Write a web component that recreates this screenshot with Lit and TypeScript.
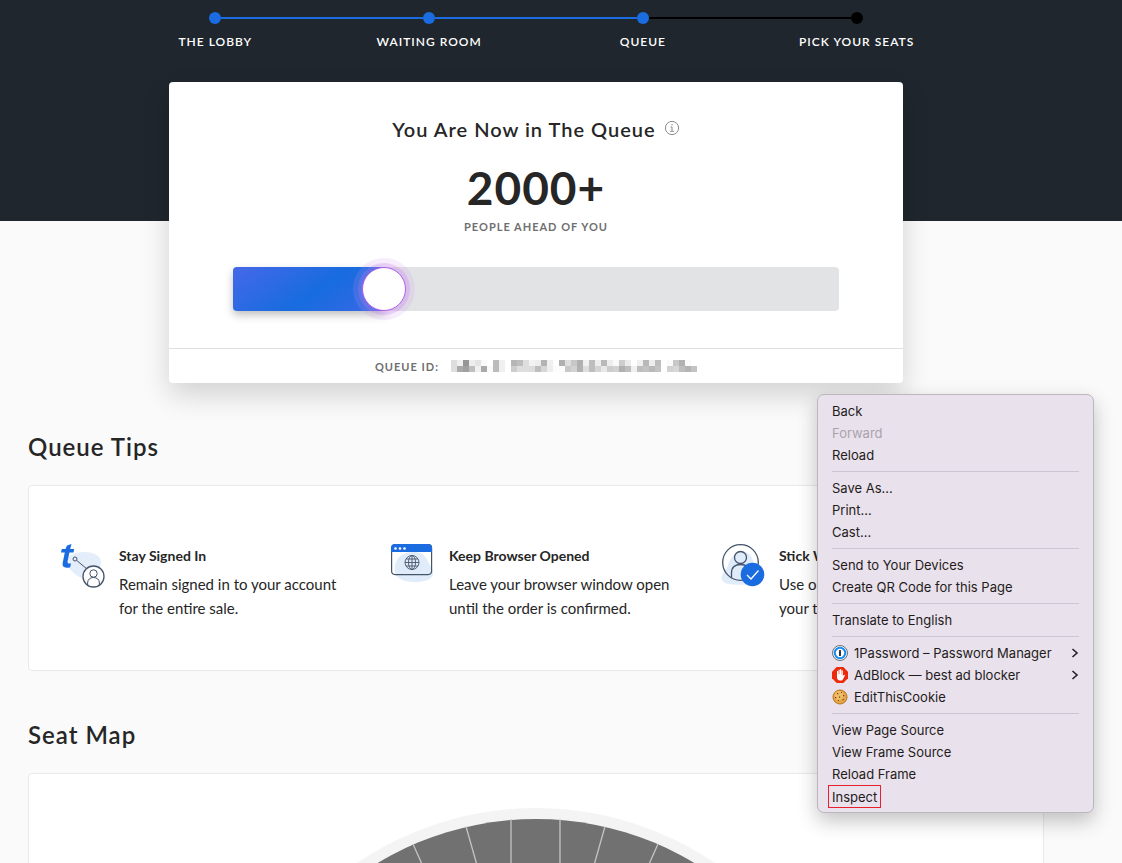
import { LitElement, html, css, svg, nothing } from "lit";
import { customElement, property } from "lit/decorators.js";
import { classMap } from "lit/directives/class-map.js";

const steps = [
  { label: "THE LOBBY", done: true },
  { label: "WAITING ROOM", done: true },
  { label: "QUEUE", done: true },
  { label: "PICK YOUR SEATS", done: false },
];

@customElement("step-tracker")
class StepTracker extends LitElement {
  static styles = css`
    :host { display: block; }
    .steps { display: grid; grid-template-columns: repeat(4, 1fr); margin: 0 auto; padding: 0; max-width: 855px; list-style: none; }
    .step { display: flex; flex-direction: column; align-items: center; gap: 8px; color: #fff; font: 600 12px/20px Lato, sans-serif; letter-spacing: 1px; }
    .track { display: grid; grid-template-columns: 1fr 12px 1fr; align-items: center; width: 100%; }
    .line { height: 2px; background: #000; }
    .dot { width: 12px; height: 12px; border-radius: 50%; background: #000; }
    .done { background: #1a6ce0; }
    .none { background: transparent; }
  `;
  render() {
    return html`<ol class="steps">
      ${steps.map(
        (s, i) => html`<li class="step">
          <div class="track">
            <span class=${classMap({ line: true, done: s.done, none: i === 0 })}></span>
            <span class=${classMap({ dot: true, done: s.done })}></span>
            <span class=${classMap({ line: true, done: !!steps[i + 1]?.done, none: i === steps.length - 1 })}></span>
          </div>
          <span>${s.label}</span>
        </li>`
      )}
    </ol>`;
  }
}

// Grey levels of the two rows of the masked id.
const mask = [
  [222, 240, 150, 238, 228, 250, 255, 188, 240, 255, 182, 190, 222, 242, 238, 180, 240, 255, 176, 222, 200, 176, 240, 190, 238, 185, 238, 250, 205, 235, 255, 240, 185, 238, 190, 255, 250, 200, 178, 250, 255],
  [222, 170, 160, 190, 240, 170, 250, 188, 240, 255, 205, 222, 222, 220, 190, 215, 238, 252, 252, 200, 210, 178, 222, 190, 212, 232, 205, 210, 176, 190, 240, 190, 195, 185, 195, 255, 210, 215, 190, 180, 195],
];

@customElement("queue-card")
class QueueCard extends LitElement {
  @property({ type: Number }) progress = 25;
  static styles = css`
    :host { display: block; }
    .card { max-width: 734px; margin: 0 auto; background: #fff; border-radius: 4px; box-shadow: 0 12px 28px rgba(0, 0, 0, 0.16); color: #262626; text-align: center; font-family: Lato, sans-serif; }
    .body { padding: 32px 64px 37px; }
    .title { display: flex; align-items: center; justify-content: center; gap: 8px; }
    h1 { margin: 0; font: 600 20px/30px Lato, sans-serif; letter-spacing: 1px; }
    .info { display: flex; padding: 0 0 2px; border: 0; background: none; }
    .count { margin-top: 16px; font: 700 46px/56px Lato, sans-serif; letter-spacing: 1px; }
    .ahead { margin: 1px 0 0; font-size: 11px; line-height: 20px; font-weight: 700; letter-spacing: 1px; color: #6f6f6f; }
    .bar { display: flex; align-items: center; height: 44px; margin-top: 30px; border-radius: 4px; background: #e2e3e5; }
    .fill { height: 44px; border-radius: 4px 0 0 4px; background: linear-gradient(145deg, #4668e8, #176cdf 55%, #3a68e6); box-shadow: 0 4px 8px rgba(0, 0, 0, 0.25); }
    .knob { flex: none; box-sizing: border-box; width: 44px; height: 44px; margin-left: -23px; border: 1px solid #b45cf0; border-radius: 50%; background: #fff; box-shadow: 0 0 0 4px rgba(190, 120, 235, 0.25), 0 0 0 9px rgba(205, 150, 245, 0.16); }
    .id { display: flex; align-items: center; justify-content: center; gap: 12px; border-top: 1px solid #dfdfdf; height: 34px; font-size: 11px; font-weight: 700; letter-spacing: 1px; color: #6f6f6f; }
  `;
  render() {
    return html`<section class="card">
      <div class="body">
        <div class="title">
          <h1>You Are Now in The Queue</h1>
          <button class="info" aria-label="Queue information">
            <svg width="16" height="16" viewBox="0 0 16 16" fill="none" stroke="#8c8c8c"><circle cx="8" cy="8" r="6.6" /><path d="M6.5 7H8v4.3M6.2 11.3h3.6" /><circle cx="8" cy="4.7" r=".7" fill="#8c8c8c" stroke="none" /></svg>
          </button>
        </div>
        <div class="count">2000+</div>
        <p class="ahead">PEOPLE AHEAD OF YOU</p>
        <div class="bar" role="progressbar" aria-label="Queue progress" aria-valuenow=${this.progress}>
          <div class="fill" style="width:${this.progress}%"></div>
          <span class="knob"></span>
        </div>
      </div>
      <div class="id">
        <span>QUEUE ID:</span>
        <svg width="246" height="12" shape-rendering="crispEdges" role="img" aria-label="Hidden">
          ${mask.map((row, y) => row.map((v, x) => svg`<rect x=${x * 6} y=${y * 6} width="6" height="6" fill=${`rgb(${v},${v},${v})`} />`))}
        </svg>
      </div>
    </section>`;
  }
}

const signedIcon = svg`
  <path d="M9 15C14 7 41 6 42 19C42 29 32 36 26 36C20 35 14 30 10 25Z" fill="#e4eefb"/>
  <path d="M8 2.500L12.500 1L11.200 6H15.200L14.500 9.500H10.400L8.600 18.200Q8.200 20.600 10.400 20.600L12 20.400L11.200 24.200Q9.600 24.800 7.600 24.800Q2.800 24.600 3.700 19.800L5.800 9.500H2L2.800 6H6.500Z" fill="#1a6ce0"/>
  <g fill="none" stroke="#44546a"><circle cx="16" cy="16" r="2"/><path d="M17.600 17.400L27 25.200"/><circle cx="34.500" cy="33.500" r="10.500" fill="#fff" stroke-width="1.300"/><circle cx="34.500" cy="30.500" r="3.700"/><path d="M28.600 42V40C28.600 36.500 31 34.500 34.500 34.500S40.400 36.500 40.400 40V42"/></g>`;

const browserIcon = svg`
  <rect x="3" y="2" width="40" height="30" rx="3.500" fill="#fff"/>
  <path d="M6 22C9 10 19 9 26 9C35 9 37 15 41 22C47 30 45 39 27 39C11 39 4 34 6 22Z" fill="#e1ecfb"/>
  <rect x="2.600" y="1.600" width="40" height="30" rx="3.500" fill="none" stroke="#44546a" stroke-width="1.200"/>
  <path d="M2 9V5Q2 1 6 1H39Q43 1 43 5V9Z" fill="#1a6ce0"/>
  <circle cx="6.500" cy="5.500" r="1.300" fill="#fff"/><circle cx="11" cy="5.500" r="1.300" fill="#fff"/><circle cx="15.500" cy="5.500" r="1.300" fill="#fff"/>
  <g fill="none" stroke="#44546a" stroke-width=".9"><circle cx="23" cy="19.500" r="7"/><ellipse cx="23" cy="19.500" rx="3.500" ry="7"/><path d="M23 12.500V26.500M16 19.500H30M17 16H29M17 23H29"/></g>`;

const deviceIcon = svg`
  <circle cx="21.500" cy="19.500" r="17.600" fill="#fff"/>
  <path d="M3 37C1 31 7 29 9 22C12 11 23 4 30 11C37 17 38 40 33 41C23 42 5 43 3 37Z" fill="#e1ecfb"/>
  <g fill="none" stroke="#44546a" stroke-width="1.300"><circle cx="21.500" cy="19.500" r="17.800"/><circle cx="21.500" cy="14.500" r="6"/><path d="M12.500 34.500V30C12.500 24 16 21.500 21.500 21.500S30.500 24 30.500 30"/></g>
  <circle cx="33.500" cy="31.500" r="11.800" fill="#1a6ce0"/><path d="M28 32L32 36L39.500 27.500" fill="none" stroke="#fff" stroke-width="1.300"/>`;

const tips = [
  { icon: signedIcon, title: "Stay Signed In", text: "Remain signed in to your account for the entire sale." },
  { icon: browserIcon, title: "Keep Browser Opened", text: "Leave your browser window open until the order is confirmed." },
  { icon: deviceIcon, title: "Stick With One Device", text: "Use only one device to secure your tickets." },
];

@customElement("queue-tips")
class QueueTips extends LitElement {
  static styles = css`
    :host { display: block; }
    .tips { display: grid; grid-template-columns: repeat(3, 1fr); padding: 56px 12px 50px; border: 1px solid #e9e9e9; border-radius: 4px; background: #fff; color: #262626; font: 400 15px/24px Lato, sans-serif; }
    .tip { display: flex; gap: 12px; padding: 0 16px 0 18px; }
    svg { flex: none; margin-top: 1px; }
    h3 { margin: 2px 0 4px; font-size: 14px; line-height: 24px; font-weight: 700; }
    p { margin: 0; max-width: 226px; }
  `;
  render() {
    return html`<div class="tips">
      ${tips.map((t) => html`<article class="tip"><svg width="48" height="48" viewBox="0 0 48 48">${t.icon}</svg><div><h3>${t.title}</h3><p>${t.text}</p></div></article>`)}
    </div>`;
  }
}

@customElement("seat-map")
class SeatMap extends LitElement {
  static styles = css`
    :host { display: block; }
    .map { display: flex; justify-content: center; padding: 34px 0; border: 1px solid #e9e9e9; border-radius: 4px; background: #fff; }
  `;
  render() {
    return html`<div class="map">
      <svg width="636" height="636" viewBox="0 0 636 636" role="img" aria-label="Seat map">
        <circle cx="318" cy="318" r="318" fill="#f4f4f4" />
        <circle cx="318" cy="318" r="307" fill="#717171" />
        <path d="M293 11V110M342 11V110M248 18.500L274 110M387 18.500L361 110M195 36L228 110M440 36L407 110" stroke="#c4c4c4" stroke-width="1.300" />
      </svg>
    </div>`;
  }
}

const onePassword = svg`<circle cx="8" cy="8" r="7.500" fill="#f3f5f7" stroke="#6a7077"/><circle cx="8" cy="8" r="5.200" fill="#fff" stroke="#1a8cf2" stroke-width="2"/><rect x="7" y="5" width="2" height="6" rx=".6" fill="#30343a"/>`;
const adBlock = svg`<path d="M4.700 0H11.300L16 4.700V11.300L11.300 16H4.700L0 11.300V4.700Z" fill="#ec2a0c"/><path d="M5 9V4.200Q5.600 3.400 6.200 4.200V7.200H6.500V2.900Q7.100 2.100 7.700 2.900V7H8V2.500Q8.700 1.700 9.300 2.500V7.200H9.600V3.600Q10.300 2.900 10.800 3.600V9L12 7.700Q13 7.500 12.900 8.400L10.900 12.400Q9.900 13.700 8 13.600Q5.300 13.400 5 10.500Z" fill="#fff"/>`;
const cookie = svg`<circle cx="8" cy="8" r="7" fill="#e5a647" stroke="#b87420"/><circle cx="7" cy="6.500" r="4.500" fill="#efbd68"/><g fill="#6b3b12"><rect x="5" y="4" width="1.200" height="1.200"/><rect x="9" y="3" width="1" height="1"/><rect x="11" y="6" width="1.200" height="1.200"/><rect x="3" y="8" width="1.200" height="1.200"/><rect x="7" y="7.500" width="1.200" height="1.200"/><rect x="10.500" y="10" width="1.200" height="1.200"/><rect x="6" y="11" width="1" height="1"/></g>`;

type Item = { label: string; icon?: unknown; sub?: boolean; disabled?: boolean; marked?: boolean };
const groups: Item[][] = [
  [{ label: "Back" }, { label: "Forward", disabled: true }, { label: "Reload" }],
  [{ label: "Save As..." }, { label: "Print..." }, { label: "Cast..." }],
  [{ label: "Send to Your Devices" }, { label: "Create QR Code for this Page" }],
  [{ label: "Translate to English" }],
  [{ label: "1Password – Password Manager", icon: onePassword, sub: true }, { label: "AdBlock — best ad blocker", icon: adBlock, sub: true }, { label: "EditThisCookie", icon: cookie }],
  [{ label: "View Page Source" }, { label: "View Frame Source" }, { label: "Reload Frame" }, { label: "Inspect", marked: true }],
];

@customElement("context-menu")
class ContextMenu extends LitElement {
  static styles = css`
    :host { display: block; }
    .menu { box-sizing: border-box; width: 277px; padding: 5px 14px; border: 1px solid #bcb6bf; border-radius: 7px; background: #e9e1ec; box-shadow: 0 8px 20px rgba(0, 0, 0, 0.24); }
    .item { display: flex; align-items: center; gap: 6px; width: 100%; height: 22px; padding: 0; border: 0; background: none; color: #1f1c20; font: 400 13px/22px Inter, sans-serif; text-align: left; white-space: nowrap; }
    .item:disabled { color: #aaa3ad; }
    .grow { flex: 1; }
    .marked { width: auto; height: 23px; margin: 0 -4px -1px; padding: 0 3px; border: 1px solid #e8202c; }
    hr { height: 1px; margin: 5px 0; border: 0; background: #cdc5d1; }
  `;
  render() {
    return html`<div class="menu" role="menu">
      ${groups.map(
        (g, i) => html`${i ? html`<hr />` : nothing}${g.map(
          (m) => html`<button role="menuitem" class=${classMap({ item: true, marked: !!m.marked })} ?disabled=${m.disabled}>
            ${m.icon ? html`<svg width="16" height="16" viewBox="0 0 16 16">${m.icon}</svg>` : nothing}<span class=${classMap({ grow: !m.marked })}>${m.label}</span>${m.sub
              ? html`<svg width="8" height="10" viewBox="0 0 8 10" fill="none" stroke="#262228" stroke-width="1.600"><path d="M1.500 1L6 5L1.500 9" /></svg>`
              : nothing}
          </button>`
        )}`
      )}
    </div>`;
  }
}

@customElement("app-root")
class AppRoot extends LitElement {
  static styles = css`
    :host { display: block; position: relative; height: 100vh; overflow: hidden; background: #fafafa; }
    .page { background: linear-gradient(#1f262d, #1f262d) top / 100% 221px no-repeat; padding: 12px 78px 0 28px; }
    .card { display: block; margin-top: 30px; }
    h2 { margin: 48px 0 22px; color: #262626; font: 600 24px/32px Lato, sans-serif; letter-spacing: 1px; }
    .menu { position: absolute; top: 394px; right: 28px; }
  `;
  render() {
    return html`<main class="page">
        <step-tracker></step-tracker>
        <queue-card class="card"></queue-card>
        <h2>Queue Tips</h2>
        <queue-tips></queue-tips>
        <h2>Seat Map</h2>
        <seat-map></seat-map>
      </main>
      <context-menu class="menu"></context-menu>`;
  }
}
